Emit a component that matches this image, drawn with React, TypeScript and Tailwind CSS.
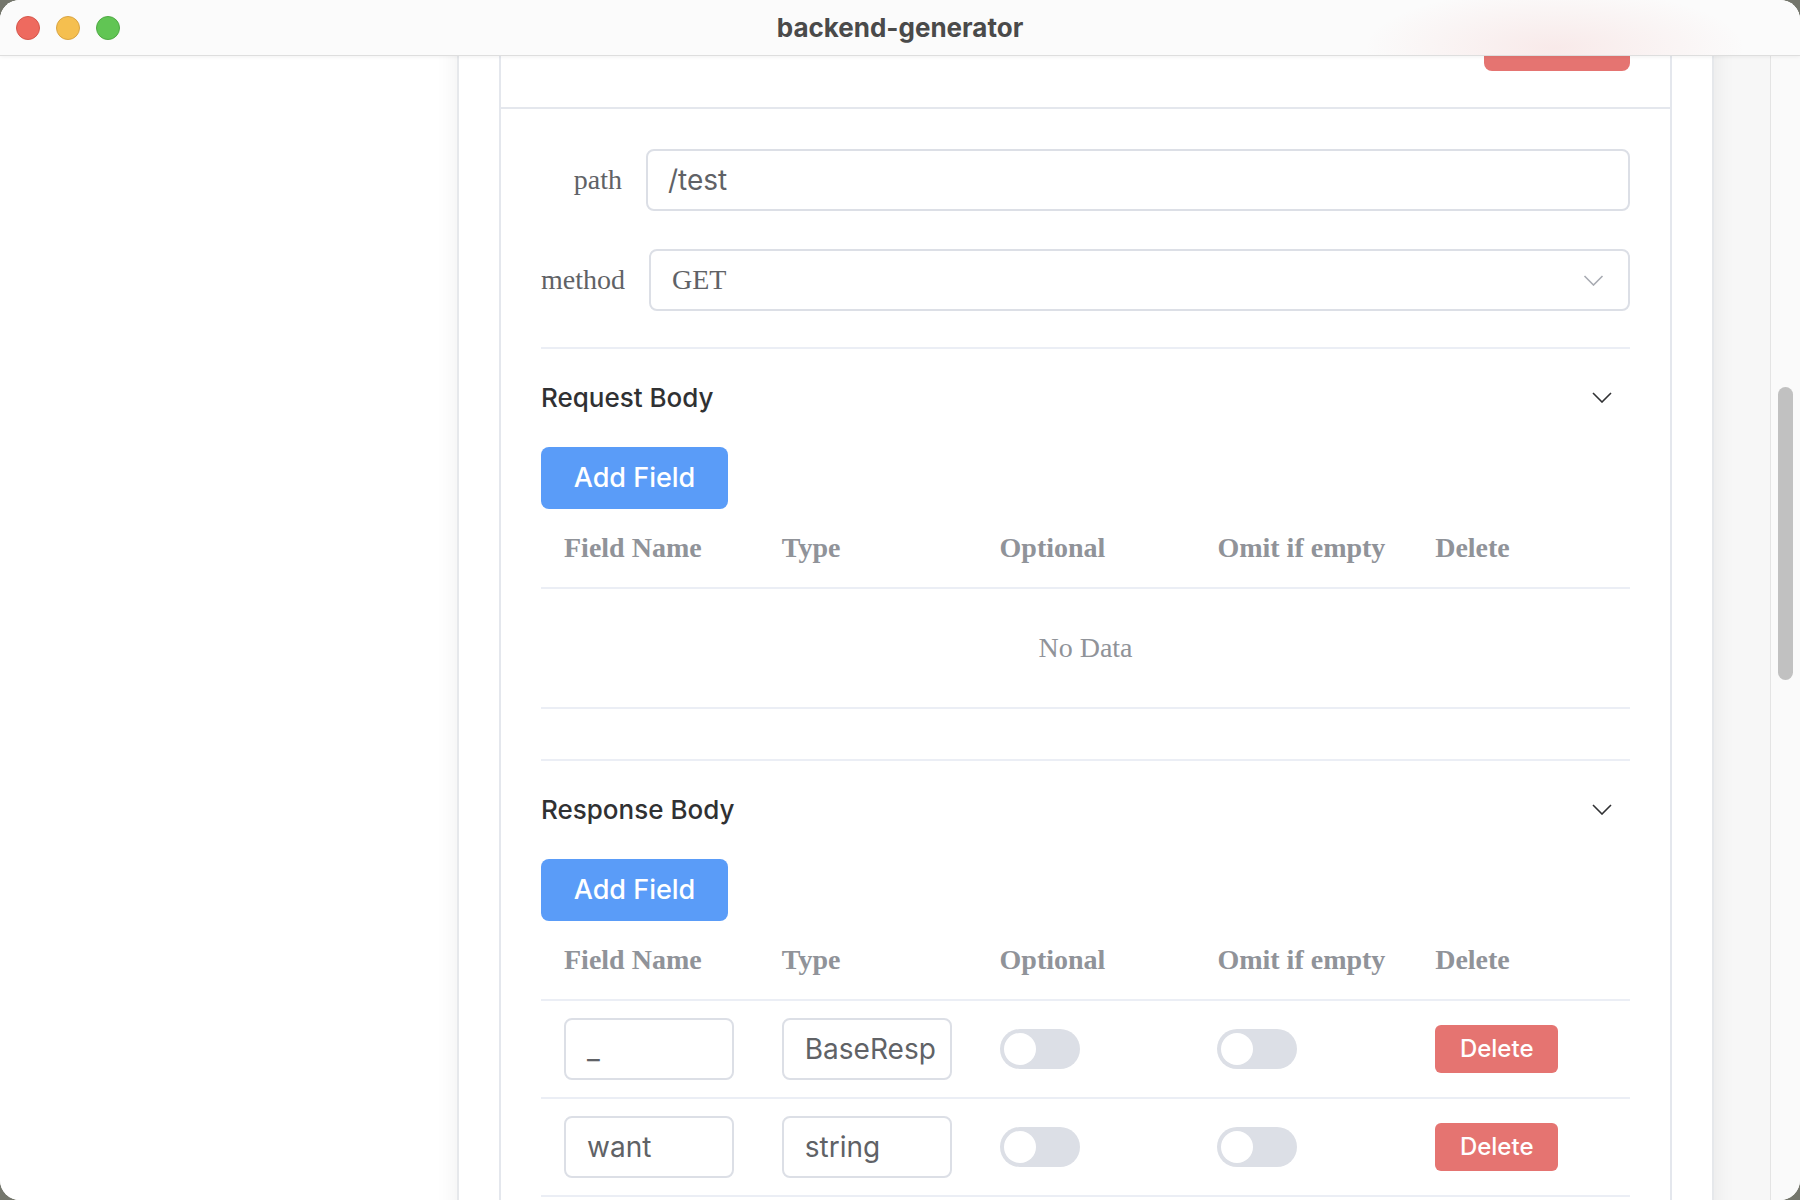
import React from "react";

type Field = { name: string; type: string };

const headers = ["Field Name", "Type", "Optional", "Omit if empty", "Delete"];

const responseFields: Field[] = [
  { name: "_", type: "BaseResp" },
  { name: "want", type: "string" },
];

function Chevron({ className }: { className: string }) {
  return (
    <svg viewBox="0 0 20 11" className={className} fill="none" stroke="currentColor" strokeWidth="1.6">
      <path d="M1 1l9 9 9-9" />
    </svg>
  );
}

function Toggle() {
  return (
    <div className="flex h-[40px] w-[80px] items-center rounded-full bg-[#dcdfe6] pl-[4px]">
      <div className="h-[32px] w-[32px] rounded-full bg-white" />
    </div>
  );
}

function TextBox({ value, className = "" }: { value: string; className?: string }) {
  return (
    <div
      className={`flex items-center rounded-[8px] border-2 border-[#dcdfe6] bg-white font-['Inter',sans-serif] text-[28px] text-[#606266] ${className}`}
    >
      {value}
    </div>
  );
}

function FieldTable({ rows }: { rows: Field[] }) {
  return (
    <div>
      <div className="grid h-[80px] grid-cols-5 items-center border-b-2 border-[#ebeef5]">
        {headers.map((h) => (
          <div key={h} className="pl-[23px] font-['Liberation_Serif',serif] text-[28px] font-bold text-[#909399]">
            {h}
          </div>
        ))}
      </div>
      {rows.length === 0 ? (
        <div className="flex h-[120px] items-center justify-center border-b-2 border-[#ebeef5] font-['Liberation_Serif',serif] text-[28px] text-[#909399]">
          No Data
        </div>
      ) : (
        rows.map((r) => (
          <div key={r.name} className="grid h-[98px] grid-cols-5 items-center border-b-2 border-[#ebeef5]">
            <div className="pl-[23px]">
              <TextBox value={r.name} className="h-[62px] w-[170px] px-[21px]" />
            </div>
            <div className="pl-[23px]">
              <TextBox value={r.type} className="h-[62px] w-[170px] px-[21px]" />
            </div>
            <div className="pl-[23px]">
              <Toggle />
            </div>
            <div className="pl-[23px]">
              <Toggle />
            </div>
            <div className="pl-[23px]">
              <button className="h-[48px] w-[123px] rounded-[6px] bg-[#e57471] font-['Inter',sans-serif] text-[24px] font-medium text-white">
                Delete
              </button>
            </div>
          </div>
        ))
      )}
    </div>
  );
}

function Section({ title, rows }: { title: string; rows: Field[] }) {
  return (
    <div className="border-t-2 border-[#ebeef5]">
      <div className="flex h-[98px] items-center justify-between pb-[2px]">
        <span className="font-['Inter',sans-serif] text-[26px] font-medium text-[#303133]">{title}</span>
        <Chevron className="mr-[18px] h-[11px] w-[20px] text-[#303133]" />
      </div>
      <button className="h-[62px] w-[187px] rounded-[8px] bg-[#5a9cf8] font-['Inter',sans-serif] text-[27px] font-medium text-white">
        Add Field
      </button>
      <FieldTable rows={rows} />
      <div className="h-[50px]" />
    </div>
  );
}

function ApiCard() {
  return (
    <div className="rounded-[8px] border-2 border-[#e4e7ed] bg-white">
      <div className="flex justify-end border-b-2 border-[#e4e7ed] px-[40px] py-[36px]">
        <button className="h-[64px] w-[146px] rounded-[8px] bg-[#e57471] font-['Inter',sans-serif] text-[24px] font-medium text-white">
          Delete
        </button>
      </div>
      <div className="p-[40px]">
        <div className="mb-[38px] flex items-center">
          <div className="w-[105px] pr-[24px] text-right font-['Liberation_Serif',serif] text-[28px] text-[#606266]">path</div>
          <TextBox value="/test" className="h-[62px] flex-1 px-[20px]" />
        </div>
        <div className="mb-[36px] flex items-center">
          <div className="w-[105px] pr-[24px] text-right font-['Liberation_Serif',serif] text-[28px] text-[#606266]">method</div>
          <div className="ml-[3px] flex h-[62px] flex-1 items-center justify-between rounded-[8px] border-2 border-[#dcdfe6] bg-white pl-[21px] pr-[24px]">
            <span className="font-['Liberation_Serif',serif] text-[28px] text-[#606266]">GET</span>
            <Chevron className="h-[11px] w-[21px] text-[#a8abb2]" />
          </div>
        </div>
        <Section title="Request Body" rows={[]} />
        <Section title="Response Body" rows={responseFields} />
      </div>
    </div>
  );
}

export default function App() {
  return (
    <div className="h-[1200px] w-[1800px] bg-[#74766c]">
      <div className="relative h-full w-full overflow-hidden rounded-[20px] bg-white">
        <div className="flex h-full">
          <div className="w-[457px] shrink-0 bg-white" />
          <div className="relative z-10 -mt-[71px] w-[1257px] shrink-0 self-start border-x-2 border-[#e6e8eb] bg-white px-[40px] pt-[40px] shadow-[0_0_22px_rgba(0,0,0,0.07)]">
            <ApiCard />
          </div>
          <div className="flex-1 bg-[#f7f7f7]" />
          <div className="flex w-[30px] shrink-0 justify-center border-l border-[#e4e4e4] bg-[#fafafa] pt-[387px]">
            <div className="h-[293px] w-[15px] rounded-full bg-[#c1c1c1]" />
          </div>
        </div>

        {/* title bar sits over the scrolled content; the tint hints at the button beneath */}
        <div className="absolute inset-x-0 top-0 z-20 grid h-[56px] grid-cols-[1fr_auto_1fr] items-center border-b border-[#dedede] bg-[#fbfbfb] bg-[radial-gradient(ellipse_190px_60px_at_1555px_48px,rgba(229,116,113,0.13),rgba(229,116,113,0))] shadow-[0_1px_4px_rgba(0,0,0,0.06)]">
          <div className="flex gap-[16px] pl-[16px]">
            <div className="h-[24px] w-[24px] rounded-full border border-[#d5574c] bg-[#ee6a5f]" />
            <div className="h-[24px] w-[24px] rounded-full border border-[#d8a443] bg-[#f5bf4f]" />
            <div className="h-[24px] w-[24px] rounded-full border border-[#4fa944] bg-[#61c554]" />
          </div>
          <div className="font-['Inter',sans-serif] text-[26px] font-bold text-[#4a4a4a]">backend-generator</div>
          <div />
        </div>
      </div>
    </div>
  );
}
